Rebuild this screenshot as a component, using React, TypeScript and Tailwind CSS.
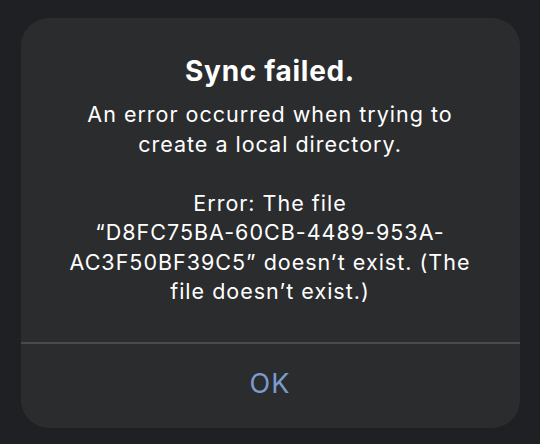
export default function App() {
  return (
    <div
      className="min-h-[444px] bg-[#1e2023] px-5 pt-[18px] pb-4"
      style={{ fontFamily: 'Inter, "Noto Sans", sans-serif' }}
    >
      {/* Alert card */}
      <div className="mx-auto flex h-[410px] w-[499px] flex-col rounded-[28px] bg-[#2b2c2e]">
        <div className="flex flex-1 flex-col items-center px-6 pt-[36px] text-center text-white">
          <h1 className="text-[28px] leading-[34px] font-bold tracking-[0.7px]">Sync failed.</h1>
          <p className="mt-[12px] text-[21.5px] leading-[29.5px] tracking-[1px]">
            An error occurred when trying to
            <br />
            create a local directory.
          </p>
          <p className="mt-[29.5px] text-[21.5px] leading-[29.5px] tracking-[1px]">
            Error: The file
            <br />
            “D8FC75BA-60CB-4489-953A-
            <br />
            AC3F50BF39C5” doesn’t exist. (The
            <br />
            file doesn’t exist.)
          </p>
        </div>

        {/* Divider */}
        <div className="h-[2px] bg-[#4a4a4d]" />

        <button className="flex h-[84px] items-center justify-center pb-1 text-[27px] tracking-[1px] text-[#7a9ccf]">
          OK
        </button>
      </div>
    </div>
  );
}
